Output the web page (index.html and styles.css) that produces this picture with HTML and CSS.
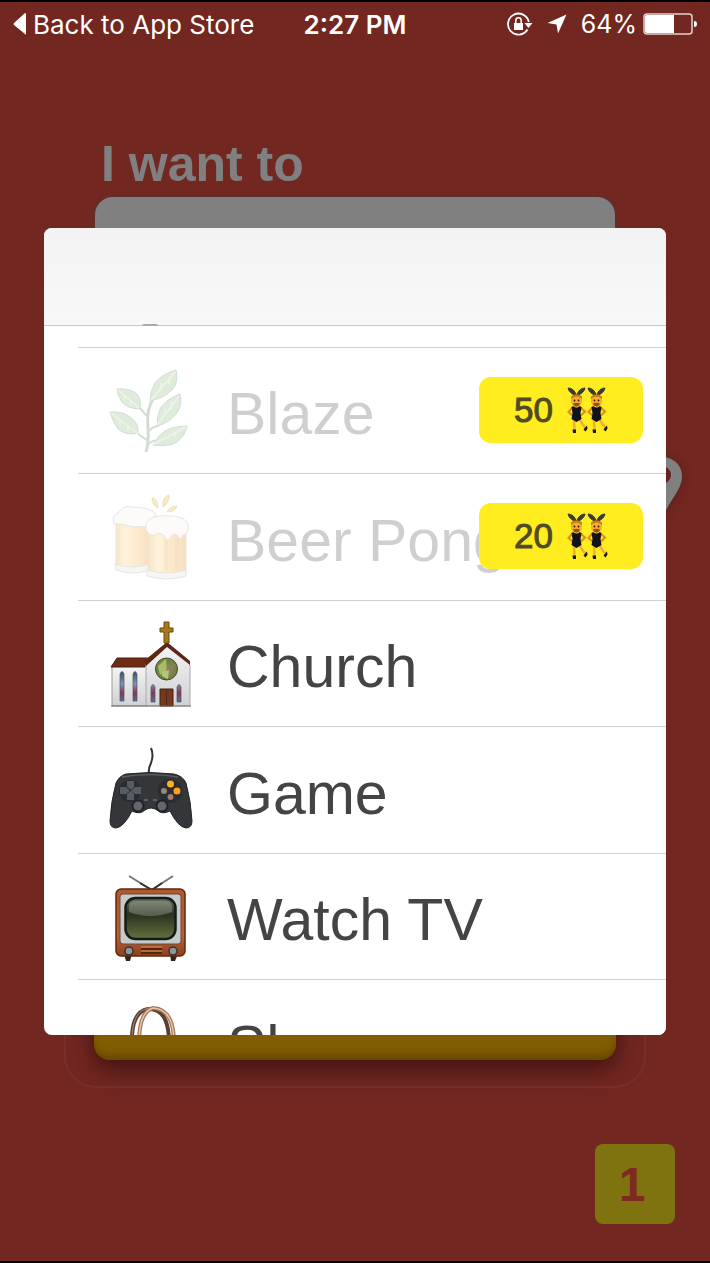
FILE: index.html
```html
<!DOCTYPE html>
<html lang="en">

<head>
    <meta charset="UTF-8">
    <meta name="viewport" content="width=device-width, initial-scale=1">
    <title>I want to</title>
    <link rel="stylesheet" href="styles.css">
</head>

<body>
    <div class="page">
        <header class="status">
            <a class="back" href="#">
                <svg width="14" height="24" viewBox="0 0 14 24"><path d="M13 2v20q0 1-1 0L1 13q-1-1 0-2L12 1q1 0 1 1z" fill="#fff"/></svg>
                <span>Back to App Store</span>
            </a>
            <span class="time">2:27 PM</span>
            <div class="signs">
                <svg width="26" height="24" viewBox="0 0 26 24">
                    <path d="M20.500 17.500A10.500 10.500 0 1 1 21.800 10" fill="none" stroke="#fff" stroke-width="1.800"/>
                    <path d="M17.500 11h8l-4 5z" fill="#fff"/>
                    <path d="M7 11h9v7H7z" fill="#fff"/>
                    <path d="M8.800 11V8.500a2.700 2.700 0 0 1 5.400 0V11" fill="none" stroke="#fff" stroke-width="1.500"/>
                </svg>
                <svg width="20" height="20" viewBox="0 0 20 20"><path d="M19.500.5L11 19.500 9.500 10.500.5 9z" fill="#fff"/></svg>
                <span>64%</span>
                <svg class="battery" width="54" height="22" viewBox="0 0 54 22">
                    <rect x="1" y="1" width="48" height="20" rx="3" fill="none" stroke="#e6cfcd" stroke-width="1.500"/>
                    <path d="M4 2h27v18H4q-2 0-2-2V4q0-2 2-2z" fill="#fff"/>
                    <path d="M51 8q3 0 3 3t-3 3z" fill="#fff"/>
                </svg>
            </div>
        </header>

        <main class="form">
            <label class="title" for="activity">I want to</label>
            <input class="field" id="activity" type="text" readonly>
            <div class="place">
                <svg width="40" height="62" viewBox="0 0 40 62"><path fill-rule="evenodd" d="M20 0C8 0 0 9 0 19c0 14 12 23 20 43 8-20 20-29 20-43C40 9 32 0 20 0zm0 9a9 9 0 0 1 0 18 9 9 0 0 1 0-18z" fill="#7f8080"/></svg>
            </div>
            <div class="card">
                <button class="go" type="button" aria-label="Go"></button>
            </div>
        </main>

        <footer class="foot">
            <button class="count" type="button">1</button>
        </footer>
    </div>

    <!-- shared by both price badges -->
    <svg class="defs" width="0" height="0">
        <symbol id="dancer" viewBox="0 0 22 46">
            <path d="M8 31L8.500 43M12.500 31l4 6 3 4" stroke="#f0ae35" stroke-width="2.500" fill="none"/>
            <path d="M6.500 20.500L2.500 25l4 3.500M14.500 20.500l4.500 4-4 4" stroke="#d98d20" stroke-width="2" fill="none"/>
            <path d="M9.500 8.500Q3 6 2 1q6 0 8.500 7.500zM11.500 8.500Q18 6 19 1q-6 0-8.500 7.500z" fill="#3a3936" stroke="#3a3936"/>
            <path d="M5.500 20l2-1q3 3 6 0l2 1-1 6 1 6-5 3-5-3 1-6z" fill="#11121a"/>
            <path d="M5 10q5.500-4 11 0v5q-1 5-5.500 5T5 15z" fill="#f9ad2a"/>
            <path d="M5 12V9.500Q10.500 5 16 9.500V12q-2-2.500-5.500-2.500T5 12z" fill="#c57917"/>
            <path d="M7 16.500q3.500-1.500 7 0-1 3-3.500 3T7 16.500z" fill="#8b5314"/>
            <circle cx="8.500" cy="13.500" r=".9" fill="#2b1b0b"/><circle cx="12.500" cy="13.500" r=".9" fill="#2b1b0b"/>
            <path d="M6.500 42.500h3.500V46H7zM17.500 42.500l3.500-4 .5 3-2 3z" fill="#15151a"/>
        </symbol>
    </svg>

    <div class="modal" role="dialog" aria-label="Pick an activity">
        <div class="bar"></div>
        <ul class="list">
            <li>
                <button class="row locked" type="button">
                    <svg class="icon" viewBox="0 0 100 100">
                        <g fill="none" stroke="#7da083" stroke-width="2">
                            <path d="M46 91q3-10 2-24-2-18 5-29" stroke-width="3"/>
                            <path d="M47 55l-8-9M47 79l-9-6M49 70q4-5 10-5M48 83l7-4"/>
                        </g>
                        <g fill="#a9c99b" stroke="#7ea07f" stroke-width="1">
                            <path d="M17 28q10-1 17 3 8 4 6 17-12 0-18-7-4-5-5-13z"/>
                            <path d="M76 9q3 13-4 20-8 8-22 11 0-10 5-18 7-9 21-13z"/>
                            <path d="M10 51q13-1 20 5 9 6 8 16-12 3-20-4-5-6-8-17z"/>
                            <path d="M80 33q3 12-4 20-7 9-19 12 0-10 3-17 6-10 20-15z"/>
                            <path d="M87 65q-2 10-10 16-7 5-24 3 5-10 12-14 9-5 22-5z"/>
                        </g>
                        <path d="M18 29l21 18M75 11L51 39M11 52l26 20M79 35L57 64M86 66L54 83M25 34l-1 5M31 39l-1 6M69 17v6M61 22v6M71 41v7M65 47v7M20 58v6M28 64v6M75 72v4" fill="none" stroke="#d0e4c6" stroke-width="1.500"/>
                    </svg>
                    <span class="name">Blaze</span>
                    <span class="price">50
                        <svg width="42" height="46" viewBox="0 0 42 46"><use href="#dancer" width="22" height="46"/><use href="#dancer" x="20" width="22" height="46"/></svg>
                    </span>
                </button>
            </li>
            <li>
                <button class="row locked" type="button">
                    <svg class="icon" viewBox="0 0 100 100">
                        <defs>
                            <linearGradient id="beer"><stop stop-color="#e9b257"/><stop offset=".25" stop-color="#fae0a0"/><stop offset=".6" stop-color="#f5c46d"/><stop offset="1" stop-color="#e5a551"/></linearGradient>
                        </defs>
                        <path d="M16 34h35l-1 46q-17 6-34 0z" fill="url(#beer)" stroke="#c9b898"/>
                        <path d="M15 77q18 6 35 0v6q-17 6-34 0z" fill="#e8e8e4" stroke="#b5b5b0"/>
                        <path d="M14 37q-3-8 5-12 4-7 14-5 16 0 22 6 3 6-4 14-12-1-18 0-10-4-19-3z" fill="#f8f6f0" stroke="#bbb6ab"/>
                        <path d="M48 44h38v42q-19 7-38 0z" fill="url(#beer)" stroke="#c9b898"/>
                        <path d="M64 50h4v33h-4zM75 50h4v33h-4z" fill="#e9a557" opacity=".6"/>
                        <path d="M47 83q20 6 39 0v6q-19 6-39 0z" fill="#e8e8e4" stroke="#b5b5b0"/>
                        <path d="M46 43q-2-10 8-13 8-2 16-1 11 0 16 5 4 4 1 12-2 3-4 2-2 7-6 0-4-3-6 2-5 7-7-2-6-3-8 0-6 2-10-5z" fill="#f8f6f0" stroke="#bbb6ab"/>
                        <path d="M52 11q5-1 6 10-6-3-6-10zM69 8q0 8-6 12-1-10 6-12zM77 19q-2 6-10 6 2-5 10-6z" fill="#e9ce48" stroke="#c6a92e"/>
                    </svg>
                    <span class="name">Beer Pong</span>
                    <span class="price">20
                        <svg width="42" height="46" viewBox="0 0 42 46"><use href="#dancer" width="22" height="46"/><use href="#dancer" x="20" width="22" height="46"/></svg>
                    </span>
                </button>
            </li>
            <li>
                <button class="row" type="button">
                    <svg class="icon" viewBox="0 0 100 100">
                        <defs>
                            <linearGradient id="wall" x2="0" y2="1"><stop stop-color="#f5f5f6"/><stop offset="1" stop-color="#d0d1d4"/></linearGradient>
                            <linearGradient id="glass" x2="0" y2="1"><stop stop-color="#33506a"/><stop offset=".4" stop-color="#8391c0"/><stop offset=".7" stop-color="#8c3550"/><stop offset="1" stop-color="#4d71aa"/></linearGradient>
                        </defs>
                        <path d="M12 52h35v40H12z" fill="url(#wall)" stroke="#999"/>
                        <path d="M17 44h32l-4 9H11z" fill="#6e2c12" stroke="#482011"/>
                        <path d="M46 46l21-17 21 17 2 6v40H46z" fill="url(#wall)" stroke="#aaa"/>
                        <path d="M44 47l23-19 23 19v4L67 33 46 52z" fill="#5b2815"/>
                        <path d="M64 8h5v6h4v4h-4v11h-5V18h-4v-4h4z" fill="#a87916" stroke="#66490c"/>
                        <circle cx="66.500" cy="55" r="11" fill="#70853f" stroke="#4a442f"/>
                        <path d="M58 52l8-7 1 11-7 5z" fill="#a9bc67"/><path d="M67 50l8 1-3 9-6 5z" fill="#8f7c63"/><path d="M62 58l7-2-1 9-6-3z" fill="#b4c77e"/>
                        <g fill="url(#glass)" stroke="#555" stroke-width=".7">
                            <path d="M20 87V60q2-5 4 0v27zM33 87V60q2-5 4 0v27zM51 88V73q2-5 4 0v15zM77 88V73q2-5 4 0v15z"/>
                        </g>
                        <path d="M60 75h13v17H60z" fill="#75381d" stroke="#3e2015"/><path d="M66.500 76v16" stroke="#4f2617"/>
                        <path d="M11 92h80" stroke="#77716e"/>
                    </svg>
                    <span class="name">Church</span>
                </button>
            </li>
            <li>
                <button class="row" type="button">
                    <svg class="icon" viewBox="0 0 100 100">
                        <path d="M49 34q-1-5 2-11 3-8 0-15" fill="none" stroke="#303235" stroke-width="2"/>
                        <path d="M26 34q24-3 48 0 9 2 12 9 5 18 6 38 0 7-6 7-8-1-16-17-8 4-13-1-3-2-6-2t-6 2q-5 5-13 1-8 16-16 17-6 0-6-7 1-20 6-38 3-7 10-9z" fill="#34363a" stroke="#222427"/>
                        <path d="M22 37q28-5 56 0" fill="none" stroke="#5a5d61" stroke-width="1.500"/>
                        <circle cx="30" cy="51" r="11" fill="#292c30"/><circle cx="70" cy="51" r="12" fill="#292c30"/>
                        <path d="M27 41h7v6l-3 3-4-3zM27 60h7v-6l-3-3-4 3zM20 47h6l4 4-4 3h-6zM41 47h-6l-4 4 4 3h6z" fill="#575c62"/>
                        <circle cx="70.500" cy="44" r="3.500" fill="#ffb01c"/><circle cx="77" cy="51" r="3.500" fill="#ff9e19"/>
                        <circle cx="64" cy="51" r="3" fill="#9a8377"/><circle cx="70.500" cy="57" r="3" fill="#a5776d"/>
                        <circle cx="38" cy="66" r="5.500" fill="#61676c" stroke="#202327" stroke-width="2"/><circle cx="62" cy="66" r="5.500" fill="#61676c" stroke="#202327" stroke-width="2"/>
                        <path d="M44 60h4M53 60h4" stroke="#878a8d"/>
                    </svg>
                    <span class="name">Game</span>
                </button>
            </li>
            <li>
                <button class="row" type="button">
                    <svg class="icon" viewBox="0 0 100 100">
                        <defs>
                            <linearGradient id="wood" x2="0" y2="1"><stop stop-color="#ad592f"/><stop offset=".7" stop-color="#b76139"/><stop offset="1" stop-color="#8a421d"/></linearGradient>
                            <linearGradient id="tube" x2="0" y2="1"><stop stop-color="#69725f"/><stop offset=".4" stop-color="#273220"/><stop offset="1" stop-color="#66713f"/></linearGradient>
                        </defs>
                        <path d="M29 9l21 13M73 9L53 22" stroke="#777" stroke-width="2"/><path d="M40 16l12 7M62 16l-10 7" stroke="#333" stroke-width="2"/>
                        <path d="M24 87h8l-2 7h-4zM70 87h8l-3 7h-4z" fill="#32231d"/>
                        <rect x="16" y="22" width="69" height="67" rx="5" fill="url(#wood)" stroke="#63270d" stroke-width="1.500"/>
                        <rect x="20" y="27" width="61" height="50" rx="3" fill="#c5cacb" stroke="#71482f"/>
                        <rect x="25.500" y="31" width="50" height="41" rx="10" fill="url(#tube)" stroke="#171b16" stroke-width="2.500"/>
                        <path d="M29 45V40q0-6 7-6h29q7 0 7 6v5q-22 8-43 0z" fill="#c9d0c5" opacity=".3"/>
                        <path d="M41 82h21M41 86h21" stroke="#57240c" stroke-width="2"/><path d="M41 80h21M41 84h21" stroke="#d98c62"/>
                        <circle cx="29" cy="84" r="4" fill="#8b9799" stroke="#37322f" stroke-width="1.500"/><circle cx="73" cy="84" r="4" fill="#8b9799" stroke="#37322f" stroke-width="1.500"/>
                    </svg>
                    <span class="name">Watch TV</span>
                </button>
            </li>
            <li>
                <button class="row" type="button">
                    <svg class="icon" viewBox="0 0 100 100">
                        <path d="M32 50q-1-31 16-34 21-1 21 34" fill="none" stroke="#5a4031" stroke-width="4"/>
                        <path d="M32 50q-1-32 17-35" fill="none" stroke="#ad8972" stroke-width="1"/>
                        <path d="M39 50q0-31 14-35 21 1 21 35" fill="none" stroke="#a5775a" stroke-width="4"/>
                        <path d="M39 50q0-31 14-35 21 1 21 35" fill="none" stroke="#e5c5ac" stroke-width="1.500"/>
                        <path d="M26 46h50l6 46H20z" fill="#b87950"/>
                    </svg>
                    <span class="name">Shop</span>
                </button>
            </li>
        </ul>
    </div>
</body>
</html>
```

FILE: styles.css
```css
* {
    padding: 0;
    margin: 0;
    box-sizing: border-box;
    list-style: none;
}

body {
    background: #722721;
    font-family: "Liberation Sans", Arial, sans-serif;
    color: #444;
}

button,
input {
    border: 0;
    font-family: inherit;
    color: inherit;
}

svg {
    display: block;
    flex: none;
}

.defs {
    position: absolute;
}

.page {
    display: flex;
    flex-direction: column;
    min-height: 100vh;
    border-top: 2px solid #000;
    border-bottom: 2px solid #000;
}

/* status bar */
.status {
    display: grid;
    grid-template-columns: 1fr auto 1fr;
    align-items: center;
    height: 44px;
    padding: 0 13px;
    font-family: Inter, sans-serif;
    font-size: 25px;
    color: #fff;
}

.back {
    display: flex;
    align-items: center;
    gap: 6px;
    font-size: 26px;
    color: #fff;
    text-decoration: none;
    white-space: nowrap;
}

.time {
    font-size: 26px;
    font-weight: 600;
}

.signs {
    display: flex;
    align-items: center;
    justify-content: flex-end;
    gap: 14px;
}

.battery {
    margin-left: -8px;
}

/* form behind the modal */
.form {
    flex: 1;
    display: flex;
    flex-direction: column;
    padding: 88px 64px 0;
}

.title {
    margin-left: 37px;
    line-height: 60px;
    font-size: 50px;
    font-weight: bold;
    color: #808080;
}

.field {
    height: 100px;
    margin: 3px 31px 0;
    border-radius: 18px;
    background: #808080;
    box-shadow: 0 0 3px #404040;
}

.place {
    display: flex;
    justify-content: flex-end;
    margin: 160px -36px 0 0;
    filter: drop-shadow(0 0 6px rgba(0, 0, 0, .2));
}

.card {
    flex: 1;
    display: flex;
    flex-direction: column;
    justify-content: flex-end;
    margin-top: 100px;
    padding: 0 28px 26px;
    border: 2px solid #78302a;
    border-radius: 32px;
}

.go {
    height: 100px;
    border-radius: 16px;
    background: #805d00;
    box-shadow: inset 0 -8px 8px -4px #604400, 0 8px 24px rgba(30, 0, 0, .6);
}

.foot {
    display: flex;
    justify-content: flex-end;
    padding: 56px 35px 37px;
}

.count {
    width: 80px;
    height: 80px;
    padding-right: 6px;
    border-radius: 8px;
    background: #7e730f;
    font-size: 48px;
    font-weight: bold;
    color: #7d2b20;
}

/* modal */
.modal {
    position: absolute;
    top: 228px;
    right: 44px;
    bottom: 228px;
    left: 44px;
    display: flex;
    flex-direction: column;
    overflow: hidden;
    border-radius: 8px;
    background: #fff;
}

.bar {
    position: relative;
    flex: none;
    height: 98px;
    border-bottom: 1px solid #c6c6c8;
    background: linear-gradient(#f4f3f3, #f8f8f8);
}

/* edge of the row scrolled under the bar */
.bar::after {
    content: "";
    position: absolute;
    bottom: -1px;
    left: 98px;
    width: 16px;
    height: 2px;
    border-radius: 8px 8px 0 0;
    background: #aaa;
}

.list {
    flex: 1;
    overflow: hidden;
    padding: 21px 0 0 34px;
}

.row {
    position: relative;
    display: flex;
    align-items: center;
    gap: 27px;
    width: 100%;
    height: 126px;
    padding: 0 22px;
    border-top: 1px solid #d2d2d4;
    background: #fff;
    font-size: 59px;
    text-align: left;
    white-space: nowrap;
}

li:nth-child(even) .row {
    height: 127px;
}

.icon {
    width: 100px;
    height: 100px;
}

.name {
    padding-top: 7px;
}

.locked .icon {
    opacity: .35;
}

.locked .name {
    opacity: .25;
}

.price {
    position: absolute;
    top: 29px;
    right: 23px;
    display: flex;
    align-items: center;
    justify-content: center;
    gap: 13px;
    width: 164px;
    height: 66px;
    border-radius: 12px;
    background: #ffed1f;
    font-size: 35px;
    color: #514b25;
    -webkit-text-stroke: 1px #514b25;
}
```
